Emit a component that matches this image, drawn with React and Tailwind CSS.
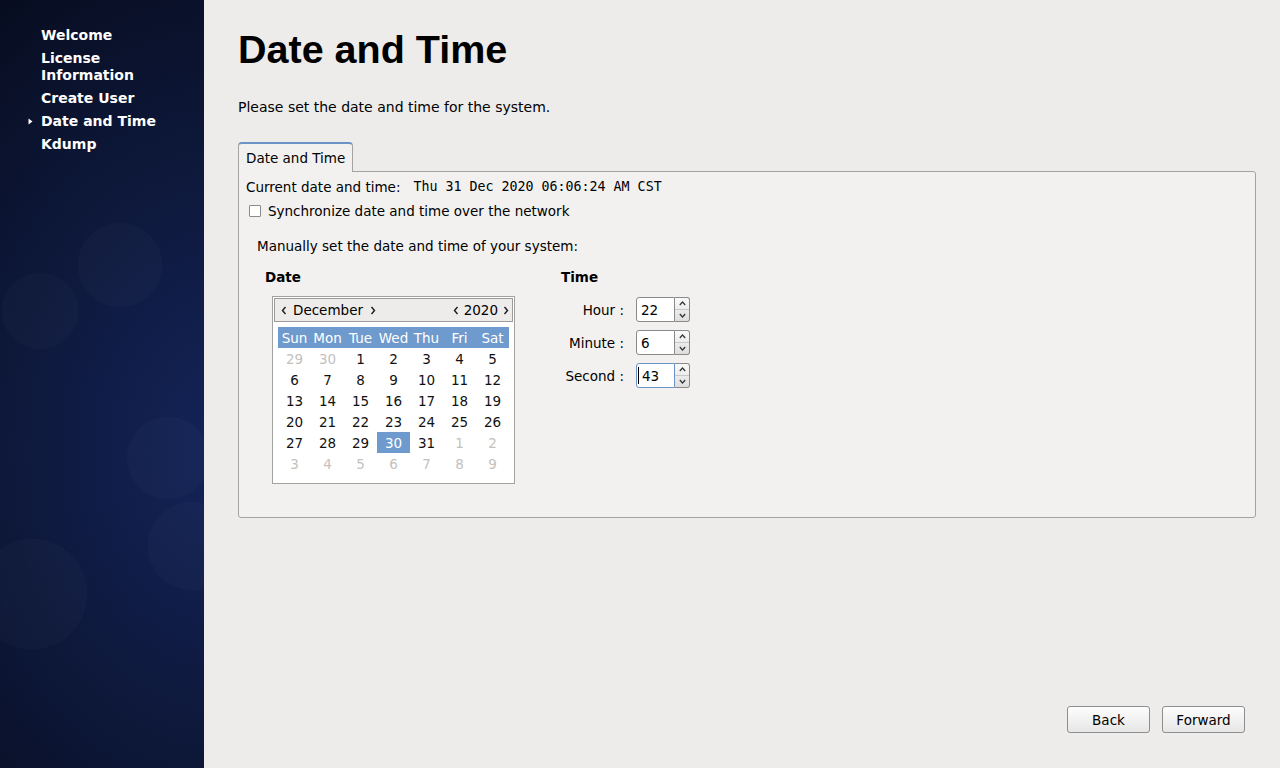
import React from 'react';

const navItems = [
  { label: ['Welcome'] },
  { label: ['License', 'Information'] },
  { label: ['Create User'] },
  { label: ['Date and Time'], active: true },
  { label: ['Kdump'] },
];

const weeks = [
  [[29, 1], [30, 1], [1], [2], [3], [4], [5]],
  [[6], [7], [8], [9], [10], [11], [12]],
  [[13], [14], [15], [16], [17], [18], [19]],
  [[20], [21], [22], [23], [24], [25], [26]],
  [[27], [28], [29], [30, 0, 1], [31], [1, 1], [2, 1]],
  [[3, 1], [4, 1], [5, 1], [6, 1], [7, 1], [8, 1], [9, 1]],
];

const dayNames = ['Sun', 'Mon', 'Tue', 'Wed', 'Thu', 'Fri', 'Sat'];

function Sidebar() {
  return (
    <aside className="relative w-[204px] shrink-0 overflow-hidden bg-[#0a1230]">
      <svg className="absolute inset-0" width="204" height="768" viewBox="0 0 204 768">
        <defs>
          <radialGradient
            id="sb"
            cx="230"
            cy="450"
            r="480"
            gradientUnits="userSpaceOnUse"
            gradientTransform="translate(230 450) scale(1 1.3) translate(-230 -450)"
          >
            <stop offset="0" stopColor="#14245a" />
            <stop offset="0.5" stopColor="#0d1738" />
            <stop offset="1" stopColor="#050917" />
          </radialGradient>
        </defs>
        <rect width="204" height="768" fill="url(#sb)" />
        <g fill="#ffffff" fillOpacity="0.018" stroke="#ffffff" strokeOpacity="0.01">
          <circle cx="120" cy="265" r="42" />
          <circle cx="40" cy="311" r="38" />
          <circle cx="168" cy="458" r="41" />
          <circle cx="192" cy="546" r="44" />
          <circle cx="32" cy="594" r="55" />
        </g>
      </svg>
      <nav className="relative flex flex-col gap-[6px] pl-[28px] pt-[27px] font-['DejaVu_Sans',sans-serif] text-[14px] font-bold leading-[17px] text-white">
        {navItems.map((item) => (
          <div key={item.label[0]} className="flex">
            <div className="flex h-[17px] w-[13px] items-center">
              {item.active && (
                <svg width="5" height="7" viewBox="0 0 5 7">
                  <path d="M0.5 0.5 L4.5 3.5 L0.5 6.5 Z" fill="#ffffff" />
                </svg>
              )}
            </div>
            <div>
              {item.label.map((l) => (
                <div key={l}>{l}</div>
              ))}
            </div>
          </div>
        ))}
      </nav>
    </aside>
  );
}

function Chevron({ dir }) {
  return (
    <svg width="6" height="9" viewBox="0 0 6 9">
      <path
        d={dir === 'left' ? 'M4.5 1 L1.5 4.5 L4.5 8' : 'M1.5 1 L4.5 4.5 L1.5 8'}
        fill="none"
        stroke="#1a1a1a"
        strokeWidth="1.4"
      />
    </svg>
  );
}

function Calendar() {
  return (
    <div className="ml-[7px] mt-[11px] w-[243px] border border-[#a2a2a2] bg-white px-[1px] pb-[9px] pt-[1px]">
      <div className="flex h-[24px] items-center justify-between border border-[#9c9c9c] bg-[#edeceb] pl-[6px] pr-[3px]">
        <div className="flex items-center">
          <Chevron dir="left" />
          <span className="ml-[6px] mr-[7px]">December</span>
          <Chevron dir="right" />
        </div>
        <div className="flex items-center">
          <Chevron dir="left" />
          <span className="ml-[5px] mr-[5px]">2020</span>
          <Chevron dir="right" />
        </div>
      </div>
      <div className="mt-[5px] px-[4px]">
        <div className="grid h-[21px] grid-cols-7 items-center bg-[#6f9acd] text-white">
          {dayNames.map((d) => (
            <div key={d} className="text-center">{d}</div>
          ))}
        </div>
        {weeks.map((w, i) => (
          <div key={i} className="grid h-[21px] grid-cols-7">
            {w.map(([n, faded, sel], j) => (
              <div
                key={j}
                className={`flex items-center justify-center ${
                  sel ? 'bg-[#6f9acd] text-white' : faded ? 'text-[#c4c1bd]' : 'text-[#111]'
                }`}
              >
                {n}
              </div>
            ))}
          </div>
        ))}
      </div>
    </div>
  );
}

function Spin({ value, focused }) {
  return (
    <div className="flex h-[25px] w-[54px]">
      <div
        className={`relative flex flex-1 items-center rounded-l-[3px] border bg-white pl-[4px] ${
          focused ? 'border-[#6d93c6]' : 'border-[#8a8a8a]'
        }`}
      >
        {focused && <div className="absolute left-[1px] top-[3px] h-[17px] w-px bg-black" />}
        <span className={focused ? 'pl-[1px]' : ''}>{value}</span>
      </div>
      <div className="flex w-[15px] flex-col rounded-r-[3px] border border-l-0 border-[#8a8a8a] bg-gradient-to-b from-[#fafafa] to-[#dedede]">
        <div className="flex flex-1 items-center justify-center border-b border-[#c8c8c8]">
          <svg width="7" height="5" viewBox="0 0 7 5">
            <path d="M0.8 4 L3.5 1 L6.2 4" fill="none" stroke="#333" strokeWidth="1.2" />
          </svg>
        </div>
        <div className="flex flex-1 items-center justify-center">
          <svg width="7" height="5" viewBox="0 0 7 5">
            <path d="M0.8 1 L3.5 4 L6.2 1" fill="none" stroke="#333" strokeWidth="1.2" />
          </svg>
        </div>
      </div>
    </div>
  );
}

function Button({ children }) {
  return (
    <button className="h-[27px] w-[83px] rounded-[3px] border border-[#8e8e8e] bg-gradient-to-b from-[#fdfdfd] to-[#e6e6e6] text-[13.5px] text-black">
      {children}
    </button>
  );
}

export default function App() {
  return (
    <div className="flex h-[768px] w-[1280px] overflow-hidden font-['DejaVu_Sans',sans-serif] text-[13.5px] leading-[16px] text-black">
      <Sidebar />
      <main className="flex flex-1 flex-col bg-[#edeceb] pl-[34px] pr-[24px] pt-[30px]">
        <h1 className="font-['Liberation_Sans',Arial,sans-serif] text-[39.5px] font-bold leading-[39px] text-black">
          Date and Time
        </h1>
        <p className="mt-[30px] text-[14px]">Please set the date and time for the system.</p>

        <div className="mt-[27px] flex">
          <div className="relative z-10 -mb-px flex h-[30px] items-center rounded-t-[4px] border border-b-0 border-[#a3a3a3] border-t-[#6d93c6] border-t-2 bg-[#f2f1f0] px-[7px]">
            Date and Time
          </div>
        </div>
        <div className="h-[347px] rounded-[3px] rounded-tl-none border border-[#a3a3a3] bg-[#f2f1f0] px-[7px] pt-[7px]">
          <div className="flex">
            <span>Current date and time:</span>
            <span className="ml-[13px] font-['DejaVu_Sans_Mono',monospace] text-[13.3px]">
              Thu 31 Dec 2020 06:06:24 AM CST
            </span>
          </div>
          <label className="mt-[8px] flex items-center">
            <span className="ml-[3px] h-[12px] w-[12px] rounded-[1px] border border-[#8a8a8a] bg-white" />
            <span className="ml-[7px]">Synchronize date and time over the network</span>
          </label>
          <div className="mt-[19px] pl-[11px]">Manually set the date and time of your system:</div>
          <div className="mt-[15px] flex pl-[19px]">
            <div className="w-[296px]">
              <div className="font-bold">Date</div>
              <Calendar />
            </div>
            <div>
              <div className="font-bold">Time</div>
              <div className="mt-[12px] flex flex-col gap-[8px]">
                {[
                  ['Hour :', '22'],
                  ['Minute :', '6'],
                  ['Second :', '43', true],
                ].map(([l, v, f]) => (
                  <div key={l} className="flex items-center">
                    <div className="w-[63px] text-right">{l}</div>
                    <div className="ml-[12px]">
                      <Spin value={v} focused={f} />
                    </div>
                  </div>
                ))}
              </div>
            </div>
          </div>
        </div>

        <div className="mt-auto flex justify-end gap-[12px] pb-[35px] pr-[11px]">
          <Button>Back</Button>
          <Button>Forward</Button>
        </div>
      </main>
    </div>
  );
}
